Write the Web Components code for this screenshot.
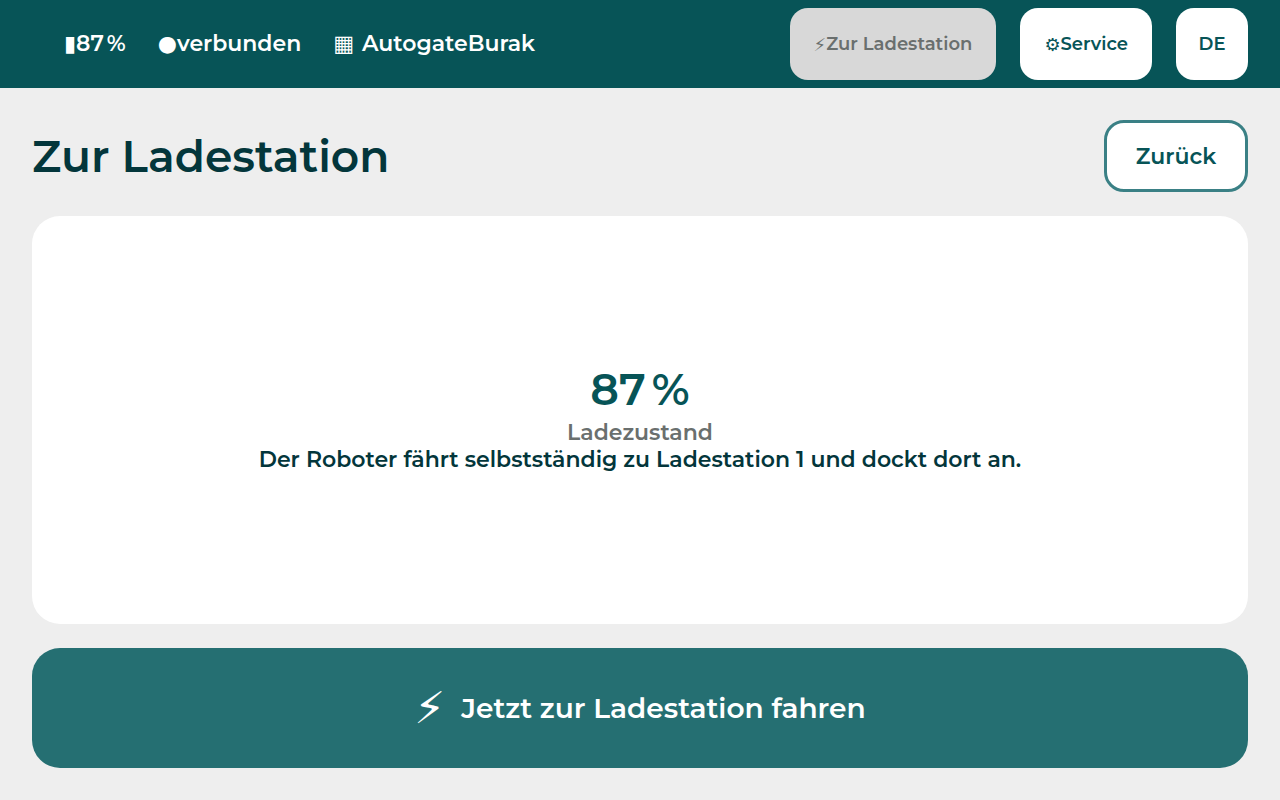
<!DOCTYPE html>
<html><head><meta charset="utf-8"><style>
html,body{margin:0;height:100%}
body{background:#eee;font-family:"Montserrat",sans-serif;font-weight:600}
</style></head><body>
<app-shell></app-shell>
<script>
const def=(n,html)=>customElements.define(n,class extends HTMLElement{constructor(){super();this.attachShadow({mode:'open'}).innerHTML=html}});
const ic=`.i{font-family:"DejaVu Sans",sans-serif;font-weight:400;white-space:pre}`;
def('app-pill',`<style>:host{display:inline-flex;align-items:center;justify-content:center;height:72px;min-width:72px;box-sizing:border-box;border-radius:18px;background:#fff;color:#075457;font-size:18px;padding:0 24px}
:host([disabled]){background:#d8d8d8;color:#6a6f6e}:host([compact]){padding:0}</style><slot></slot>`);
def('app-top',`<style>${ic}:host{display:flex;height:88px;background:#075457;color:#fff;align-items:center;padding:0 32px 2px 64px;box-sizing:border-box;font-size:22px;gap:32px}.sp{flex:1}.r{display:flex;gap:24px;margin-bottom:-2px}.g{margin-right:8px}</style>
<span><span class="i">▮</span>87\u202f%</span><span><span class="i">●</span>verbunden</span><span><span class="i g">▦</span>AutogateBurak</span><span class="sp"></span><div class="r"><app-pill disabled><span class="i" style="font-family:'DejaVu Sans';font-weight:400">⚡\uFE0E</span>Zur Ladestation</app-pill><app-pill><span class="i" style="font-family:'DejaVu Sans';font-weight:400">⚙\uFE0E</span>Service</app-pill><app-pill compact>DE</app-pill></div>`);
def('app-shell',`<style>${ic}:host{display:flex;flex-direction:column;height:800px}
main{flex:1;display:flex;flex-direction:column;padding:32px;gap:24px}
header{display:flex;justify-content:space-between;align-items:center}
h1{margin:0;font-size:44px;font-weight:600;color:#03363b}
.back{height:72px;min-width:144px;box-sizing:border-box;border:3px solid #3a8085;border-radius:20px;background:#fff;color:#075457;font-size:22px;display:flex;align-items:center;justify-content:center}
.card{flex:1;background:#fff;border-radius:28px;display:flex;flex-direction:column;align-items:center;justify-content:center}
.n{font-size:44px;line-height:1;margin-bottom:8px;font-weight:600;color:#075457}.l{font-size:22px;color:#6a6f6e}.d{font-size:22px;color:#03363b}
.go{height:120px;background:#256f72;border-radius:28px;color:#fff;font-size:28px;display:flex;align-items:center;justify-content:center;gap:16px}
.b{font-size:44px;line-height:1}
</style><app-top></app-top><main><header><h1>Zur Ladestation</h1><div class="back">Zurück</div></header>
<div class="card"><div class="n">87\u202f%</div><div class="l">Ladezustand</div><div class="d">Der Roboter fährt selbstständig zu Ladestation 1 und dockt dort an.</div></div>
<div class="go"><span class="i b">⚡\uFE0E</span><span>Jetzt zur Ladestation fahren</span></div></main>`);
</script></body></html>
